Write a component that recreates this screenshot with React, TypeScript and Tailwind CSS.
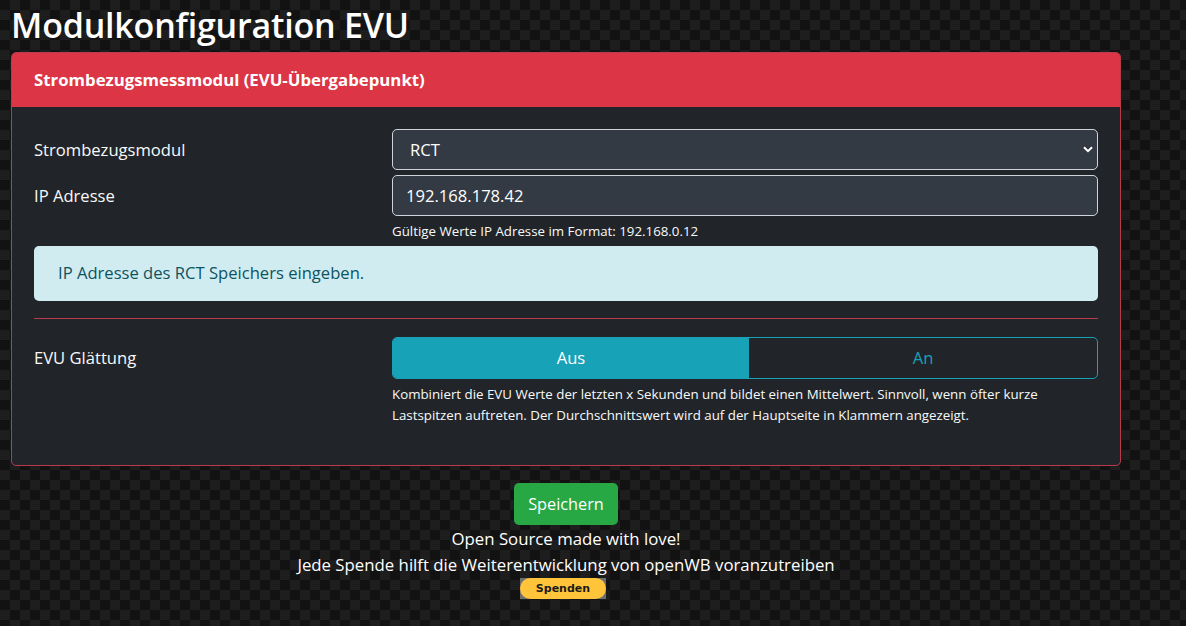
const CARBON =
  "bg-[#171717] bg-[repeating-linear-gradient(0deg,#0000_0_1px,#0000001a_1px_2px),conic-gradient(#1f1f1f_25%,#131313_0_50%,#1f1f1f_0_75%,#131313_0)] bg-size-[20px_20px]";

const FONT = "font-['Open_Sans','Noto_Sans',sans-serif]";

function Row({ label, children }: { label: string; children: React.ReactNode }) {
  return (
    <div className="flex">
      <label className="w-[358px] shrink-0 pt-[7px] text-[16.6px] leading-[27px] text-[#f8f9fa]">{label}</label>
      <div className="min-w-0 flex-1">{children}</div>
    </div>
  );
}

export default function App() {
  return (
    <div className={`${CARBON} ${FONT} h-[626px] overflow-hidden text-white`}>
      <div className="w-[1121px] pl-[11px]">
        <h1 className="pt-[2px] pb-px text-[34px] leading-[46px] font-semibold tracking-[-0.2px]">Modulkonfiguration EVU</h1>

        <div className="mt-[3px] overflow-hidden rounded-[5px] border border-[#b83a4b] bg-[#212529]">
          <div className="-mx-px -mt-px flex h-[55px] items-center bg-[#dc3545] px-[23px] text-[16.8px] font-bold">
            Strombezugsmessmodul (EVU-Übergabepunkt)
          </div>
          <div className="px-[22px] pt-[22px] pb-[39px]">
            <Row label="Strombezugsmodul">
              <div className="relative">
                <select className="h-[41px] w-full appearance-none rounded-[5px] border border-[#ced4da] bg-[#343a43] pt-px pl-[17px] text-[16.6px] text-white outline-none">
                  <option>RCT</option>
                </select>
                <svg
                  viewBox="0 0 10 7"
                  className="pointer-events-none absolute top-[17px] right-[5px] h-[7px] w-[10px]"
                  fill="none"
                  stroke="#ffffff"
                  strokeWidth="2"
                >
                  <path d="M1 1.2l4 4 4-4" />
                </svg>
              </div>
            </Row>
            <div className="mt-[5px]">
              <Row label="IP Adresse">
                <input
                  readOnly
                  value="192.168.178.42"
                  className="h-[41px] w-full rounded-[5px] border border-[#ced4da] bg-[#343a43] px-[13px] text-[16.6px] text-white outline-none"
                />
                <p className="mt-[6px] text-[13.3px] leading-[19px] text-[#f8f9fa]">
                  Gültige Werte IP Adresse im Format: 192.168.0.12
                </p>
              </Row>
            </div>
            <div className="mt-[5px] flex h-[55px] items-center rounded-[5px] bg-[#d1ecf1] px-[24px] text-[16.6px] text-[#0c5460]">
              IP Adresse des RCT Speichers eingeben.
            </div>
            <hr className="mt-[17px] border-0 border-t border-[#b83a4b]" />
            <div className="mt-[18px]">
              <Row label="EVU Glättung">
                <div className="flex h-[42px] overflow-hidden rounded-[5px] border border-[#17a2b8] text-[16.6px]">
                  <div className="flex w-[356px] items-center justify-center bg-[#17a2b8] text-white">Aus</div>
                  <div className="flex flex-1 items-center justify-center text-[#17a2b8]">An</div>
                </div>
                <p className="mt-[5px] text-[13.3px] leading-[21px] text-[#f8f9fa]">
                  Kombiniert die EVU Werte der letzten x Sekunden und bildet einen Mittelwert. Sinnvoll, wenn öfter kurze
                  Lastspitzen auftreten. Der Durchschnittswert wird auf der Hauptseite in Klammern angezeigt.
                </p>
              </Row>
            </div>
          </div>
        </div>
      </div>

      <div className="flex w-[1132px] flex-col items-center pt-[17px] text-[16.8px] leading-[26px]">
        <button className="h-[42px] w-[104px] rounded-[5px] bg-[#28a745] text-[16.3px] text-white">Speichern</button>
        <div className="mt-px">Open Source made with love!</div>
        <div>Jede Spende hilft die Weiterentwicklung von openWB voranzutreiben</div>
        <div className="mr-[6px] bg-[#6e6e6e]">
          <div className="flex h-[21px] w-[86px] items-center justify-center rounded-full bg-[#ffc439] font-['DejaVu_Sans',sans-serif] text-[11px] leading-none font-bold text-[#1b1b1b]">
            Spenden
          </div>
        </div>
      </div>
    </div>
  );
}
